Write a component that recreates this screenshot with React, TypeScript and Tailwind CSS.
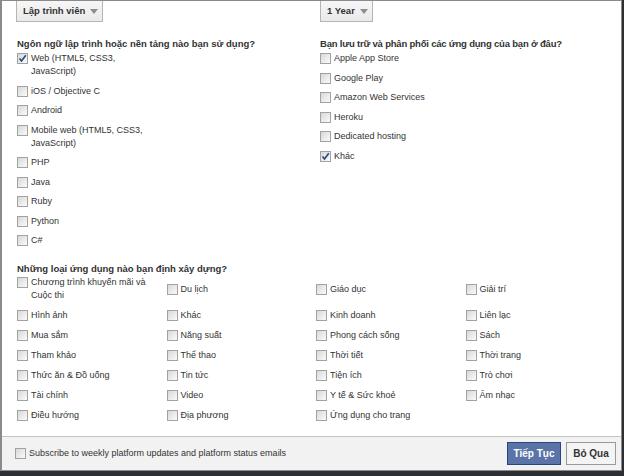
import React from 'react';

const langs = [
  { label: 'Web (HTML5, CSS3, JavaScript)', checked: true },
  { label: 'iOS / Objective C' },
  { label: 'Android' },
  { label: 'Mobile web (HTML5, CSS3, JavaScript)' },
  { label: 'PHP' },
  { label: 'Java' },
  { label: 'Ruby' },
  { label: 'Python' },
  { label: 'C#' },
];

const hosts = [
  { label: 'Apple App Store' },
  { label: 'Google Play' },
  { label: 'Amazon Web Services' },
  { label: 'Heroku' },
  { label: 'Dedicated hosting' },
  { label: 'Khác', checked: true },
];

// row by row, 4 columns
const kinds = [
  'Chương trình khuyến mãi và Cuộc thi', 'Du lịch', 'Giáo dục', 'Giải trí',
  'Hình ảnh', 'Khác', 'Kinh doanh', 'Liên lạc',
  'Mua sắm', 'Năng suất', 'Phong cách sống', 'Sách',
  'Tham khảo', 'Thể thao', 'Thời tiết', 'Thời trang',
  'Thức ăn & Đồ uống', 'Tin tức', 'Tiện ích', 'Trò chơi',
  'Tài chính', 'Video', 'Y tế & Sức khoẻ', 'Âm nhạc',
  'Điều hướng', 'Địa phương', 'Ứng dụng cho trang', '',
];

const Box = ({ checked = false }: { checked?: boolean }) => (
  <span className="relative mt-px h-[11px] w-[11px] shrink-0 border border-[#a2a2a2] bg-gradient-to-br from-[#d8d8d8] to-[#fbfbfb]">
    {checked && (
      <svg viewBox="0 0 11 11" className="absolute -left-px -top-px h-[11px] w-[11px]">
        <path d="M2.5 5.5 L4.5 8 L8.8 2.2" fill="none" stroke="#26457e" strokeWidth="1.6" />
      </svg>
    )}
  </span>
);

const Item = ({ label, checked, w = 'max-w-[112px]' }: { label: string; checked?: boolean; w?: string }) => (
  <label className="flex items-start gap-[3px] leading-[13px]">
    <Box checked={checked} />
    <span className={w}>{label}</span>
  </label>
);

const Drop = ({ text }: { text: string }) => (
  <div className="flex h-[21px] items-center gap-[5px] border border-t-0 border-[#b5b5b5] bg-gradient-to-b from-[#f7f7f7] to-[#e9e9e9] pl-[6px] pr-[4px] text-[9.5px] font-bold text-[#333]">
    {text}
    <svg viewBox="0 0 8 5" className="h-[5px] w-[8px]">
      <path d="M0 0 H8 L4 5 Z" fill="#8d8d8d" />
    </svg>
  </div>
);

export default function App() {
  return (
    <div className="flex h-[476px] w-[624px] bg-[#2c2f33] font-['Liberation_Sans',Arial,sans-serif] text-[9px] text-[#333]">
      <div className="flex h-[471px] w-[622px] flex-col border-l-2 border-r border-t border-b border-[#8a8a8a] bg-white">
        <div className="flex flex-1 flex-col pl-[15px]">
          <div className="flex">
            <div className="flex w-[303px] flex-col">
              <div className="-ml-px flex">
                <Drop text="Lập trình viên" />
              </div>
              <h3 className="mt-[15px] text-[9.5px] font-bold leading-[13px]">
                Ngôn ngữ lập trình hoặc nền tảng nào bạn sử dụng?
              </h3>
              <div className="mt-[2px] flex flex-col gap-[6.5px]">
                {langs.map((l) => (
                  <Item key={l.label} label={l.label} checked={l.checked} />
                ))}
              </div>
            </div>
            <div className="flex flex-col">
              <div className="flex">
                <Drop text="1 Year" />
              </div>
              <h3 className="mt-[15px] text-[9.5px] font-bold leading-[13px] tracking-[-0.2px]">
                Bạn lưu trữ và phân phối các ứng dụng của bạn ở đâu?
              </h3>
              <div className="mt-[2px] flex flex-col gap-[6.5px]">
                {hosts.map((l) => (
                  <Item key={l.label} label={l.label} checked={l.checked} w="" />
                ))}
              </div>
            </div>
          </div>

          <h3 className="mt-[15px] text-[9.5px] font-bold leading-[13px]">
            Những loại ứng dụng nào bạn định xây dựng?
          </h3>
          <div className="mt-[1px] grid grid-cols-[149.5px_149.5px_149.5px_149.5px] items-center gap-y-[7px]">
            {kinds.map((k, i) =>
              k ? <Item key={i} label={k} w="max-w-[118px]" /> : <span key={i} />
            )}
          </div>
        </div>

        <div className="flex h-[34px] items-center border-t border-[#c4c4c4] bg-[#f2f2f2] pl-[13px] pr-[5px]">
          <Item label="Subscribe to weekly platform updates and platform status emails" w="text-[9px]" />
          <div className="ml-auto flex gap-[5px]">
            <button className="h-[23px] w-[54px] border border-[#29447e] bg-[#5b74a8] text-[10px] font-bold text-white">
              Tiếp Tục
            </button>
            <button className="h-[23px] w-[50px] border border-[#999] bg-[#f4f4f4] text-[10px] font-bold text-[#333]">
              Bỏ Qua
            </button>
          </div>
        </div>
      </div>
    </div>
  );
}
